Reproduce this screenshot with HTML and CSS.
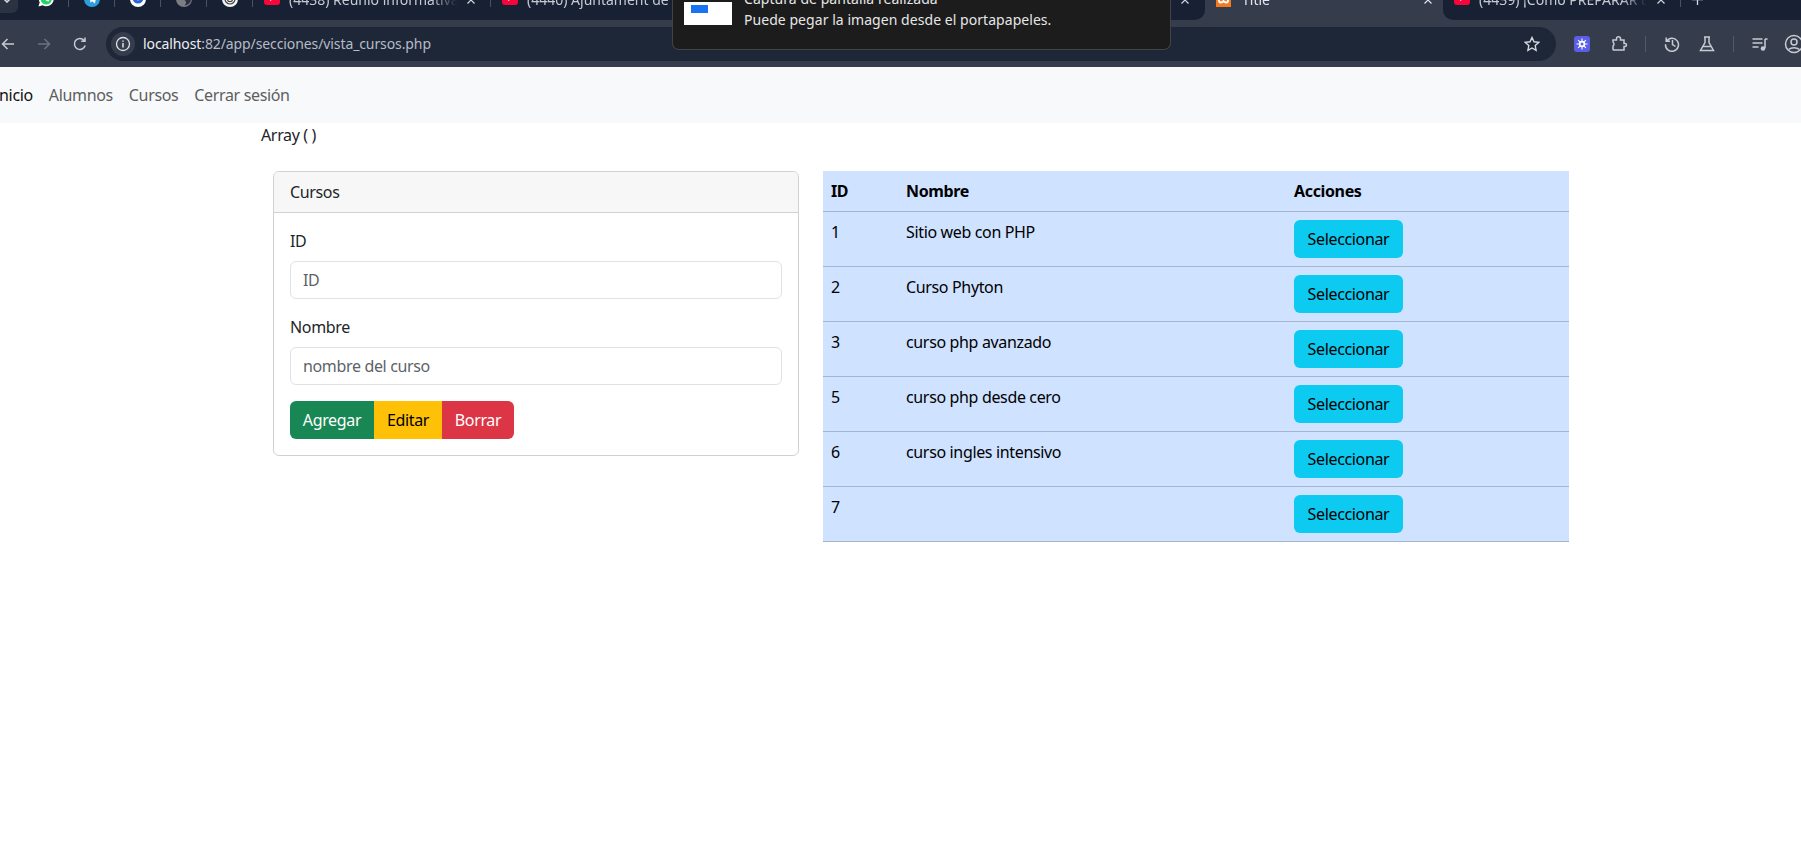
FILE: index.html
```html
<!DOCTYPE html>
<html lang="es">
<head>
    <meta charset="UTF-8">
    <meta name="viewport" content="width=device-width, initial-scale=1.0">
    <title>Title</title>
    <link rel="stylesheet" href="styles.css">
</head>
<body>
    <header class="browser">
        <div class="tabstrip">
            <div class="tabs-left">
                <div class="tab-search">
                    <svg width="10" height="6" viewBox="0 0 10 6"><path d="M1 1l4 4 4-4" fill="none" stroke="#d5d8de" stroke-width="1.6"/></svg>
                </div>
                <div class="pinned">
                    <svg class="fav" width="16" height="16" viewBox="0 0 16 16"><path d="M.5 15.500l1.200-4.200a7.500 7.500 0 1 1 3 3z" fill="#fff"/><circle cx="8.200" cy="8" r="5.600" fill="#25d366"/><path d="M5.600 5.200c.5 3 2 4.600 5 5.400l.8-1.400-1.700-.8-.7.7c-.9-.4-1.500-1-1.900-2l.7-.7-.8-1.700z" fill="#fff"/></svg>
                    <span class="tab-sep"></span>
                </div>
                <div class="pinned">
                    <svg class="fav" width="16" height="16" viewBox="0 0 16 16"><circle cx="8" cy="8" r="8" fill="#2c9fdc"/><path d="M3 8l9.500-4-1.500 8.500-3-2.200-1.500 1.500-.4-2.500 4-3.400-5 3z" fill="#fff"/></svg>
                    <span class="tab-sep"></span>
                </div>
                <div class="pinned">
                    <svg class="fav" width="16" height="16" viewBox="0 0 16 16"><circle cx="8" cy="8" r="8" fill="#fff"/><circle cx="8" cy="7" r="5.500" fill="#2b64d8"/><path d="M5.500 6l2.500 2.500L10.500 6" fill="none" stroke="#fff" stroke-width="1.800"/></svg>
                    <span class="tab-sep"></span>
                </div>
                <div class="pinned">
                    <svg class="fav" width="16" height="16" viewBox="0 0 16 16"><circle cx="8" cy="8" r="8" fill="#7a7d84"/><path d="M8.500 1.500a6.500 6.500 0 0 1 0 13c2-2 2-3.500.5-5-1.500-1.500-1.500-5-.5-8z" fill="#2b3040"/></svg>
                    <span class="tab-sep"></span>
                </div>
                <div class="pinned">
                    <svg class="fav" width="16" height="16" viewBox="0 0 16 16"><circle cx="8" cy="8" r="8" fill="#f4f4f4"/><circle cx="8" cy="8" r="5" fill="none" stroke="#444" stroke-width="1.200"/><circle cx="8" cy="8" r="2.600" fill="none" stroke="#444" stroke-width="1.200"/></svg>
                    <span class="tab-sep"></span>
                </div>
                <div class="tab">
                    <svg class="fav-yt" width="16" height="16" viewBox="0 0 16 16"><rect width="16" height="16" rx="3" fill="#f7063b"/><path d="M6 7v5l4.500-2.500z" fill="#fff"/></svg>
                    <span class="tab-title">(4438) Reunió informativa de</span>
                    <svg class="tab-close" width="8" height="8" viewBox="0 0 8 8"><path d="M.5.500l7 7M7.500.500l-7 7" stroke="#d5d8de" stroke-width="1.200"/></svg>
                    <span class="tab-sep"></span>
                </div>
                <div class="tab">
                    <svg class="fav-yt" width="16" height="16" viewBox="0 0 16 16"><rect width="16" height="16" rx="3" fill="#f7063b"/><path d="M6 7v5l4.500-2.500z" fill="#fff"/></svg>
                    <span class="tab-title">(4440) Ajuntament de Palma</span>
                    <svg class="tab-close" width="8" height="8" viewBox="0 0 8 8"><path d="M.5.500l7 7M7.500.500l-7 7" stroke="#d5d8de" stroke-width="1.200"/></svg>
                    <span class="tab-sep"></span>
                </div>
                <div class="tab">
                    <span class="tab-title tab-title-blank"></span>
                    <svg class="tab-close" width="8" height="8" viewBox="0 0 8 8"><path d="M.5.500l7 7M7.500.500l-7 7" stroke="#d5d8de" stroke-width="1.200"/></svg>
                    <span class="tab-sep"></span>
                </div>
                <div class="tab">
                    <span class="tab-title tab-title-blank"></span>
                    <svg class="tab-close" width="8" height="8" viewBox="0 0 8 8"><path d="M.5.500l7 7M7.500.500l-7 7" stroke="#d5d8de" stroke-width="1.200"/></svg>
                </div>
            </div>
            <div class="tab tab-active">
                <svg class="fav-xampp" width="15" height="15" viewBox="0 0 15 15"><rect width="15" height="15" fill="#f37a20"/><path d="M3 2.500v6c0 2.500 3 2.500 4.500.5 1.500 2 4.500 2 4.500-.5v-6" fill="none" stroke="#fff" stroke-width="2"/></svg>
                <span class="tab-title">Title</span>
                <svg class="tab-close" width="8" height="8" viewBox="0 0 8 8"><path d="M.5.500l7 7M7.500.500l-7 7" stroke="#e2e4e8" stroke-width="1.200"/></svg>
            </div>
            <div class="tabs-right">
                <div class="tab">
                    <svg class="fav-yt" width="16" height="16" viewBox="0 0 16 16"><rect width="16" height="16" rx="3" fill="#f7063b"/><path d="M6 7v5l4.500-2.500z" fill="#fff"/></svg>
                    <span class="tab-title">(4439) ¡Cómo PREPARAR un</span>
                    <svg class="tab-close" width="8" height="8" viewBox="0 0 8 8"><path d="M.5.500l7 7M7.500.500l-7 7" stroke="#d5d8de" stroke-width="1.200"/></svg>
                    <span class="tab-sep"></span>
                </div>
                <svg class="new-tab" width="11" height="11" viewBox="0 0 11 11"><path d="M5.500 0v11M0 5.500h11" stroke="#d5d8de" stroke-width="1.300"/></svg>
            </div>
        </div>

        <div class="toolbar">
            <div class="nav-btn">
                <svg width="16" height="16" viewBox="0 0 16 16"><path d="M14 8H2.500M7.500 3l-5 5 5 5" fill="none" stroke="#c6cad2" stroke-width="1.500"/></svg>
            </div>
            <div class="nav-btn">
                <svg width="16" height="16" viewBox="0 0 16 16"><path d="M2 8h11.500M8.500 3l5 5-5 5" fill="none" stroke="#6c7280" stroke-width="1.500"/></svg>
            </div>
            <div class="nav-btn">
                <svg width="16" height="16" viewBox="0 0 16 16"><path d="M13.200 9.500A5.500 5.500 0 1 1 12 4.200M13 1.500v3.800H9.200" fill="none" stroke="#c6cad2" stroke-width="1.500"/></svg>
            </div>
            <div class="omnibox">
                <span class="site-info">
                    <svg width="16" height="16" viewBox="0 0 16 16"><circle cx="8" cy="8" r="6.500" fill="none" stroke="#e0e3e8" stroke-width="1.300"/><path d="M8 7v4.500M8 4.500v1.300" stroke="#e0e3e8" stroke-width="1.500"/></svg>
                </span>
                <span class="url"><span class="url-host">localhost</span>:82/app/secciones/vista_cursos.php</span>
                <svg class="star" width="16" height="16" viewBox="0 0 16 16"><path d="M8 1.500l2 4.300 4.700.6-3.500 3.200.9 4.700L8 12l-4.100 2.300.9-4.700L1.300 6.400 6 5.800z" fill="none" stroke="#d5d8de" stroke-width="1.400"/></svg>
            </div>
            <div class="tool tool-ext">
                <span class="ext-badge">
                    <svg width="12" height="12" viewBox="0 0 12 12"><path d="M6 .500v11M.5 6h11M2.100 2.100l7.800 7.800M9.900 2.100l-7.800 7.800" stroke="#fff" stroke-width="1.100"/><circle cx="6" cy="6" r="3.200" fill="#fff"/><circle cx="6" cy="6" r="1.500" fill="#5b5fe8"/></svg>
                </span>
            </div>
            <div class="tool">
                <svg width="18" height="18" viewBox="0 0 18 18"><path d="M3 5h3.500V3.800a2 2 0 0 1 4 0V5H14v3.500h1a1.500 1.500 0 0 1 0 3h-1V15H3.500l-.5-.5V11a2.500 2.500 0 0 0 0-4z" fill="none" stroke="#c6cad2" stroke-width="1.500"/></svg>
            </div>
            <span class="tool-sep"></span>
            <div class="tool tool-history">
                <svg width="18" height="18" viewBox="0 0 18 18"><path d="M3.200 2.500v3.800H7M3.500 6.300a6.500 6.500 0 1 1-1 3M9.500 5v4.500l3 2" fill="none" stroke="#c6cad2" stroke-width="1.500"/></svg>
            </div>
            <div class="tool">
                <svg width="18" height="18" viewBox="0 0 18 18"><path d="M6 2h6M7 2v5.500L2.500 15.500h13L11 7.500V2" fill="none" stroke="#c6cad2" stroke-width="1.500"/><path d="M5 11.500h8" stroke="#c6cad2" stroke-width="1.500"/></svg>
            </div>
            <span class="tool-sep"></span>
            <div class="tool tool-queue">
                <svg width="18" height="18" viewBox="0 0 18 18"><path d="M1.500 4h10M1.500 8h10M1.500 12h6" stroke="#c6cad2" stroke-width="1.500"/><path d="M14 4h2.500M14 4v9" stroke="#c6cad2" stroke-width="1.500"/><circle cx="12" cy="13.500" r="2.300" fill="#c6cad2"/></svg>
            </div>
            <div class="tool">
                <svg width="20" height="20" viewBox="0 0 20 20"><circle cx="10" cy="10" r="8.500" fill="none" stroke="#c6cad2" stroke-width="1.500"/><circle cx="10" cy="8" r="3" fill="none" stroke="#c6cad2" stroke-width="1.500"/><path d="M4.500 15.500c3-2.500 8-2.500 11 0" fill="none" stroke="#c6cad2" stroke-width="1.500"/></svg>
            </div>
        </div>

        <div class="notification">
            <div class="notif-thumb"><span class="notif-thumb-blue"></span></div>
            <div class="notif-text">
                <div>Captura de pantalla realizada</div>
                <div>Puede pegar la imagen desde el portapapeles.</div>
            </div>
        </div>
    </header>

    <nav class="navbar">
        <a class="nav-link active" href="#">Inicio</a>
        <a class="nav-link" href="#">Alumnos</a>
        <a class="nav-link" href="#">Cursos</a>
        <a class="nav-link" href="#">Cerrar sesión</a>
    </nav>

    <main class="container">
        <div class="debug">Array ( )</div>
        <div class="row">
            <div class="col-form">
                <div class="card">
                    <div class="card-header">Cursos</div>
                    <form class="card-body">
                        <label for="id">ID</label>
                        <input type="text" id="id" placeholder="ID">
                        <label for="nombre">Nombre</label>
                        <input type="text" id="nombre" placeholder="nombre del curso">
                        <div class="btn-group">
                            <button type="button" class="btn btn-success">Agregar</button>
                            <button type="button" class="btn btn-warning">Editar</button>
                            <button type="button" class="btn btn-danger">Borrar</button>
                        </div>
                    </form>
                </div>
            </div>
            <div class="col-table">
                <table class="table">
                    <thead>
                        <tr><th class="c-id">ID</th><th class="c-name">Nombre</th><th>Acciones</th></tr>
                    </thead>
                    <tbody>
                        <tr><td>1</td><td>Sitio web con PHP</td><td><button type="button" class="btn btn-info">Seleccionar</button></td></tr>
                        <tr><td>2</td><td>Curso Phyton</td><td><button type="button" class="btn btn-info">Seleccionar</button></td></tr>
                        <tr><td>3</td><td>curso php avanzado</td><td><button type="button" class="btn btn-info">Seleccionar</button></td></tr>
                        <tr><td>5</td><td>curso php desde cero</td><td><button type="button" class="btn btn-info">Seleccionar</button></td></tr>
                        <tr><td>6</td><td>curso ingles intensivo</td><td><button type="button" class="btn btn-info">Seleccionar</button></td></tr>
                        <tr><td>7</td><td></td><td><button type="button" class="btn btn-info">Seleccionar</button></td></tr>
                    </tbody>
                </table>
            </div>
        </div>
    </main>
</body>
</html>
```

FILE: styles.css
```css
* {
    box-sizing: border-box;
}

html, body {
    margin: 0;
    overflow: hidden;
}

body {
    height: 865px;
    font-family: "Noto Sans", sans-serif;
    font-size: 16px;
    line-height: 24px;
    letter-spacing: -0.35px;
    color: #212529;
    background: #fff;
}

/* browser chrome */
.browser {
    position: relative;
    background: #353d4d;
}

.tabstrip {
    display: flex;
    align-items: flex-end;
    height: 20px;
    overflow: hidden;
    font-size: 14px;
    letter-spacing: 0;
    color: #c6cad2;
}

.tabs-left, .tabs-right {
    display: flex;
    align-items: flex-end;
    height: 20px;
    background: #182033;
    flex-shrink: 0;
}

.tabs-left {
    width: 1205px;
    border-bottom-right-radius: 10px;
}

.tabs-right {
    flex: 1;
    border-bottom-left-radius: 10px;
}

.tab-search {
    display: flex;
    justify-content: center;
    align-items: flex-end;
    align-self: flex-start;
    width: 18px;
    height: 13px;
    margin-right: 5px;
    padding: 0 5px 10px 0;
    background: #2b3242;
    border-bottom-right-radius: 6px;
}

.pinned {
    display: flex;
    align-items: flex-end;
    justify-content: flex-end;
    width: 46px;
    height: 40px;
    padding-bottom: 13px;
    flex-shrink: 0;
}

.fav {
    margin-right: 14px;
}

.tab {
    display: flex;
    align-items: flex-end;
    width: 238px;
    height: 40px;
    padding: 0 0 13px 11px;
    flex-shrink: 0;
}

.tab-sep {
    width: 1px;
    height: 16px;
    margin-left: auto;
    background: #4a5160;
    flex-shrink: 0;
}

.pinned .tab-sep {
    margin-left: 0;
}

.fav-yt {
    margin-bottom: 2px;
    flex-shrink: 0;
}

.fav-xampp {
    flex-shrink: 0;
}

.tab-title {
    width: 168px;
    margin-left: 9px;
    margin-bottom: -3px;
    line-height: 20px;
    white-space: nowrap;
    overflow: hidden;
    -webkit-mask-image: linear-gradient(to right, #000 85%, transparent);
    mask-image: linear-gradient(to right, #000 85%, transparent);
    flex-shrink: 0;
}

.tab-title-blank {
    margin-left: 25px;
}

.tab-close {
    margin: 0 0 3px 10px;
    flex-shrink: 0;
}

.tab-active {
    color: #e2e4e8;
}

.tab-active .tab-title {
    margin-left: 11px;
    width: 172px;
}

.new-tab {
    margin: 0 0 15px 11px;
}

.toolbar {
    display: flex;
    align-items: center;
    height: 47px;
    margin-left: -10px;
    width: 1830px;
}

.nav-btn {
    display: flex;
    justify-content: center;
    width: 36px;
    flex-shrink: 0;
}

.omnibox {
    display: flex;
    align-items: center;
    width: 1450px;
    height: 34px;
    margin-left: 8px;
    padding: 0 16px 0 5px;
    background: #1e2738;
    border-radius: 17px;
    flex-shrink: 0;
}

.site-info {
    display: flex;
    align-items: center;
    justify-content: center;
    width: 24px;
    height: 24px;
    background: #353d4d;
    border-radius: 50%;
}

.url {
    margin-left: 8px;
    font-size: 14px;
    letter-spacing: -0.1px;
    color: #b6bbc5;
}

.url-host {
    color: #eceef1;
}

.star {
    margin-left: auto;
}

.tool {
    display: flex;
    justify-content: center;
    width: 36px;
    flex-shrink: 0;
}

.tool-ext {
    margin-left: 8px;
    margin-right: 1px;
}

.ext-badge {
    display: flex;
    align-items: center;
    justify-content: center;
    width: 16px;
    height: 16px;
    background: #5b5fe8;
    border-radius: 3px;
}

.tool-sep {
    width: 1px;
    height: 16px;
    margin: 0 8px;
    background: #525968;
    flex-shrink: 0;
}

.tool-history {
    margin-right: -1px;
}

.tool-queue {
    margin-right: -2px;
}

.notification {
    position: absolute;
    top: 0;
    left: 672px;
    display: flex;
    align-items: flex-end;
    width: 499px;
    height: 50px;
    padding: 0 12px 19px 11px;
    overflow: hidden;
    background: #1c1c1c;
    border: 1px solid #434343;
    border-top: 0;
    border-radius: 0 0 7px 7px;
    font-size: 14px;
    line-height: 21px;
    letter-spacing: 0.05px;
    color: #e6e6e6;
}

.notif-thumb {
    width: 48px;
    height: 23px;
    margin: 0 12px 5px 0;
    padding: 3px 0 0 7px;
    background: #fff;
    flex-shrink: 0;
}

.notif-thumb-blue {
    display: block;
    width: 17px;
    height: 8px;
    background: #1a73f0;
}

/* page */
.navbar {
    display: flex;
    align-items: center;
    height: 56px;
    margin-left: -14px;
    background: #f8f9fa;
}

.nav-link {
    padding: 8px;
    color: #5c5e60;
    text-decoration: none;
}

.nav-link.active {
    color: #111;
}

.container {
    width: 1320px;
    margin-left: 261px;
}

.debug {
    height: 48px;
    color: #212529;
}

.row {
    display: flex;
}

.col-form {
    width: 550px;
    padding: 0 12px;
}

.col-table {
    width: 770px;
    padding: 0 12px;
}

.card {
    background: #fff;
    border: 1px solid #d0d1d2;
    border-radius: 6px;
}

.card-header {
    height: 41px;
    padding: 8px 16px;
    background: #f7f7f7;
    border-bottom: 1px solid #d0d1d2;
    border-radius: 5px 5px 0 0;
}

.card-body {
    display: flex;
    flex-direction: column;
    padding: 16px;
}

.card-body label {
    margin-bottom: 8px;
}

.card-body input {
    height: 38px;
    margin-bottom: 16px;
    padding: 6px 12px;
    font: inherit;
    letter-spacing: inherit;
    color: #212529;
    background: #fff;
    border: 1px solid #dee2e6;
    border-radius: 6px;
}

.card-body input::placeholder {
    color: #5c636a;
    opacity: 1;
}

.btn-group {
    display: flex;
}

.btn {
    height: 38px;
    padding: 6px 0;
    font: inherit;
    letter-spacing: inherit;
    text-align: center;
    border: 1px solid transparent;
    border-radius: 6px;
}

.btn-group .btn {
    border-radius: 0;
}

.btn-group .btn:first-child {
    border-radius: 6px 0 0 6px;
}

.btn-group .btn:last-child {
    border-radius: 0 6px 6px 0;
}

.btn-success {
    width: 84px;
    color: #fff;
    background: #198754;
}

.btn-warning {
    width: 68px;
    color: #000;
    background: #ffc107;
}

.btn-danger {
    width: 72px;
    color: #fff;
    background: #dc3545;
}

.btn-info {
    display: block;
    width: 109px;
    color: #000;
    background: #0dcaf0;
}

.table {
    width: 746px;
    border-collapse: collapse;
    table-layout: fixed;
    color: #000;
    background: #cfe2ff;
}

.table th, .table td {
    padding: 8px;
    text-align: left;
    vertical-align: top;
    border-bottom: 1px solid #a6b5cc;
}

.c-id {
    width: 75px;
}

.c-name {
    width: 388px;
}
```
